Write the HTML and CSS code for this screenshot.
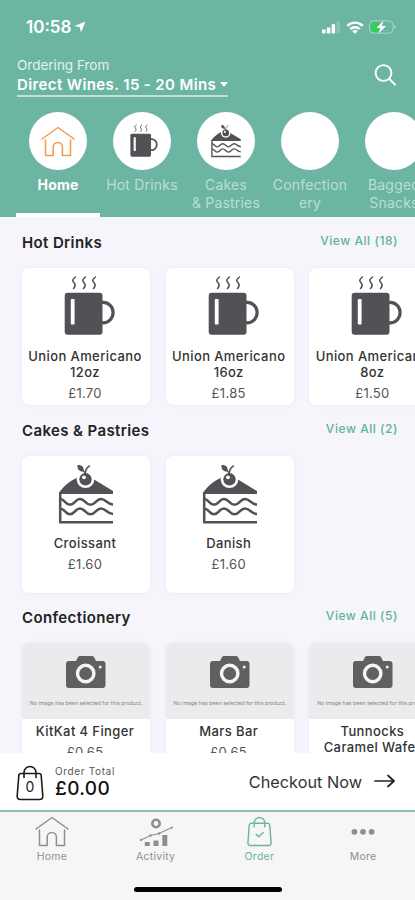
FILE: index.html
```html
<!DOCTYPE html>
<html lang="en">
<head>
<meta charset="utf-8">
<meta name="viewport" content="width=device-width, initial-scale=1">
<title>Order</title>
<link rel="stylesheet" href="styles.css">
</head>
<body>
<svg class="defs" aria-hidden="true">
  <symbol id="house" viewBox="0 0 34 31">
    <path d="M1 13 17 1.500 33 13M4.500 14v15.500h7.700V21a4.600 4.600 0 0 1 9.200 0v8.500h8.100V14" fill="none" stroke="currentColor" stroke-width="1.500" stroke-linecap="round" stroke-linejoin="round"/>
  </symbol>
  <symbol id="mug" viewBox="0 0 128 76">
    <rect x="42.700" y="24.700" width="37.800" height="42" rx="3" fill="#505255"/>
    <rect x="48.800" y="31" width="3.800" height="25.500" rx=".8" fill="#fff"/>
    <path d="M80 34.400h1.200a9.900 10.200 0 0 1 0 20.400H80" fill="none" stroke="#505255" stroke-width="3.200"/>
    <g fill="none" stroke="#484a4c" stroke-width="1.500" stroke-linecap="round">
      <path d="M53.500 9c-3.600 2.500-3.200 4-1.500 5.800s1.600 3.500-.5 5.700"/>
      <path d="M63.500 9c-3.600 2.500-3.200 4-1.500 5.800s1.600 3.500-.5 5.700"/>
      <path d="M73.500 9c-3.600 2.500-3.200 4-1.500 5.800s1.600 3.500-.5 5.700"/>
    </g>
  </symbol>
  <symbol id="cake" viewBox="0 0 128 76">
    <path d="M37 37c5-8 13-14 22-16.500l9 .5 23 14V38H37z" fill="#505255"/>
    <g fill="none" stroke="#505255" stroke-width="2.500">
      <path d="M38.200 36v30.300H91"/>
      <path d="M38 43c5 0 5 5.800 10 5.800s5-5.800 10-5.800 5.500 5.800 10.500 5.800S74 43 79 43s6 5.500 12 5.500"/>
      <path d="M38 52.500c5 0 5 5.800 10 5.800s5-5.800 10-5.800 5.500 5.800 10.500 5.800S74 52.500 79 52.500s6 5.500 12 5.500"/>
    </g>
    <circle cx="63.500" cy="23.300" r="8.800" fill="#fff"/>
    <circle cx="63.500" cy="23.300" r="6.200" fill="#505255"/>
    <circle cx="62" cy="21.300" r="1.900" fill="#fff"/>
    <path d="M63.200 18.500c0-4 1.300-7 4.300-8.500M63.200 18c-.5-1.500-1-2.500-2-3.500" fill="none" stroke="#505255" stroke-width="1.400" stroke-linecap="round"/>
    <path d="M55.500 9c4-.5 7 2 6 6.500-4 .5-6.500-2-6-6.500z" fill="#505255"/>
  </symbol>
  <symbol id="camera" viewBox="0 0 128 76">
    <path d="M47 18h7l2-4q.5-1 2-1h12q1.500 0 2 1l2 4h6.500q3 0 3 3v21q0 3-3 3H47q-3 0-3-3V21q0-3 3-3z" fill="#606060"/>
    <circle cx="63.700" cy="30.500" r="8.200" fill="#606060" stroke="#f4f5f5" stroke-width="3.400"/>
    <circle cx="78.200" cy="24" r="1.500" fill="#eceeee"/>
  </symbol>
</svg>

<div class="phone">
  <header class="header">
    <div class="status">
      <span class="time">10:58</span>
      <svg class="locate" viewBox="0 0 12 12"><path d="M11.500.5 7 11.500 5.800 6.200.5 5z" fill="#fff"/></svg>
      <svg class="signal" viewBox="0 0 19 13"><g fill="#fff"><rect y="8.500" width="3.500" height="4" rx=".8"/><rect x="4.800" y="6.500" width="3.500" height="6" rx=".8"/><rect x="9.600" y="3" width="3.500" height="9.500" rx=".8"/><rect x="14.400" width="3.500" height="12.500" rx=".8" opacity=".2"/></g></svg>
      <svg class="wifi" viewBox="0 0 18 13"><g fill="none" stroke="#fff" stroke-width="2.400"><path d="M1.200 4.800a11.200 11.200 0 0 1 15.600 0M4.200 8.100a7 7 0 0 1 9.600 0"/></g><path d="M9 12.800 6.300 10.200a4 4 0 0 1 5.400 0z" fill="#fff"/></svg>
      <svg class="battery" viewBox="0 0 27 14"><rect x=".5" y=".8" width="23.500" height="12.400" rx="4" fill="none" stroke="#fff" stroke-opacity=".4"/><path d="M4.500 2.200H10v9.600H4.500q-2.500 0-2.500-2.500V4.700q0-2.500 2.500-2.500z" fill="#2fd158"/><path d="M25.200 4.800v4.400q1.300-.6 1.300-2.200t-1.300-2.200z" fill="#fff" opacity=".5"/><path d="M14.500.5 7.500 8h4l-2 5.500L17.200 6h-4.400z" fill="#fff"/></svg>
    </div>
    <div class="venue-row">
      <div class="venue">
        <div class="venue-label"><span>Ordering From</span></div>
        <div class="venue-name"><span>Direct Wines. 15 - 20 Mins</span><i class="caret"></i></div>
      </div>
      <svg class="search" viewBox="0 0 24 24"><circle cx="10.500" cy="10" r="7.900" fill="none" stroke="#fff" stroke-width="1.900"/><path d="m16.200 15.800 6.400 6.400" stroke="#fff" stroke-width="2"/></svg>
    </div>
    <nav class="tabs">
      <div class="tab active"><div class="disc"><svg class="house"><use href="#house"/></svg></div><span>Home</span></div>
      <div class="tab"><div class="disc"><svg class="mini"><use href="#mug"/></svg></div><span>Hot Drinks</span></div>
      <div class="tab"><div class="disc"><svg class="mini"><use href="#cake"/></svg></div><span>Cakes<br>&amp; Pastries</span></div>
      <div class="tab"><div class="disc"></div><span>Confection<br>ery</span></div>
      <div class="tab"><div class="disc"></div><span>Bagged<br>Snacks</span></div>
    </nav>
  </header>

  <main class="content">
    <section class="section">
      <div class="section-head"><h2>Hot Drinks</h2><a>View All (18)</a></div>
      <div class="cards">
        <article class="card"><svg class="art"><use href="#mug"/></svg><h3>Union Americano<br>12oz</h3><p>£1.70</p></article>
        <article class="card"><svg class="art"><use href="#mug"/></svg><h3>Union Americano<br>16oz</h3><p>£1.85</p></article>
        <article class="card"><svg class="art"><use href="#mug"/></svg><h3>Union Americano<br>8oz</h3><p>£1.50</p></article>
      </div>
    </section>
    <section class="section">
      <div class="section-head"><h2>Cakes &amp; Pastries</h2><a>View All (2)</a></div>
      <div class="cards">
        <article class="card"><svg class="art"><use href="#cake"/></svg><h3>Croissant</h3><p>£1.60</p></article>
        <article class="card"><svg class="art"><use href="#cake"/></svg><h3>Danish</h3><p>£1.60</p></article>
      </div>
    </section>
    <section class="section">
      <div class="section-head"><h2>Confectionery</h2><a>View All (5)</a></div>
      <div class="cards">
        <article class="card"><div class="noimage"><svg class="art"><use href="#camera"/></svg><small>No image has been selected for this product.</small></div><h3>KitKat 4 Finger</h3><p>£0.65</p></article>
        <article class="card"><div class="noimage"><svg class="art"><use href="#camera"/></svg><small>No image has been selected for this product.</small></div><h3>Mars Bar</h3><p>£0.65</p></article>
        <article class="card"><div class="noimage"><svg class="art"><use href="#camera"/></svg><small>No image has been selected for this product.</small></div><h3>Tunnocks<br>Caramel Wafer</h3><p>£0.65</p></article>
      </div>
    </section>
  </main>

  <div class="basket">
    <svg class="bag" viewBox="0 0 28 36"><g fill="none" stroke="#1b1b1b" stroke-width="1.600" stroke-linecap="round"><path d="M5 8.500h18q2 0 2.200 2l1.600 20.500q.2 3.500-3.300 3.500h-19Q1 34.500 1.200 31L2.800 10.500Q3 8.500 5 8.500zM8 12.500V7.500a6 6 0 0 1 12 0v5"/></g><text x="14" y="27" text-anchor="middle">0</text></svg>
    <div class="total"><small>Order Total</small><strong>£0.00</strong></div>
    <div class="checkout"><span>Checkout Now</span><svg viewBox="0 0 22 14"><path d="M1 7h19M14 1.500 20 7l-6 5.500" fill="none" stroke="#222" stroke-width="1.700" stroke-linecap="round" stroke-linejoin="round"/></svg></div>
  </div>

  <footer class="footer">
    <nav class="nav">
      <div class="item"><svg class="house"><use href="#house"/></svg><span>Home</span></div>
      <div class="item"><svg class="activity" viewBox="0 0 34 31"><circle cx="17" cy="7.500" r="3.700" fill="none" stroke="currentColor" stroke-width="2.600"/><path d="M2 24 11.500 19.500 20 17.500l13-6" fill="none" stroke="currentColor" stroke-width="1.200"/><g fill="currentColor"><circle cx="2" cy="24" r="1.200"/><circle cx="11.500" cy="19.500" r="1.200"/><circle cx="20" cy="17.500" r="1.200"/><circle cx="33" cy="11.500" r="1"/><path d="M5.800 26h5v4h-5zM14.500 24.500h5v5.500h-5zM23.300 19h5v11h-5z"/></g></svg><span>Activity</span></div>
      <div class="item current"><svg class="order" viewBox="0 0 26 32"><g fill="none" stroke="currentColor" stroke-width="1.500" stroke-linecap="round" stroke-linejoin="round"><path d="M4.500 7.500h17q2 0 2.200 2l1.300 18q.2 3-2.800 3H3.800q-3 0-2.800-3l1.300-18q.2-2 2.200-2zM7.500 11V7a5.500 5.500 0 0 1 11 0v4M9.500 19l2.800 2.500 4.500-4.500"/></g></svg><span>Order</span></div>
      <div class="item"><svg class="more" viewBox="0 0 34 31"><g fill="currentColor"><circle cx="8.400" cy="15.800" r="2.900"/><circle cx="17" cy="15.800" r="2.900"/><circle cx="25.600" cy="15.800" r="2.900"/></g></svg><span>More</span></div>
    </nav>
    <div class="grabber"></div>
  </footer>
</div>
</body>
</html>
```

FILE: styles.css
```css
* { box-sizing: border-box; margin: 0; padding: 0; }
body { width: 415px; height: 900px; overflow: hidden; font-family: Inter, "Liberation Sans", sans-serif; background: #f5f5fb; color: #222; }
svg { display: block; flex: none; }
.defs { width: 0; height: 0; position: absolute; }
.phone { display: flex; flex-direction: column; width: 415px; height: 900px; overflow: hidden; }

.header { flex: none; height: 217px; background: #6db5a3; color: #fff; }
.status { display: flex; align-items: center; height: 54px; padding-left: 26px; }
.time { font-size: 17px; font-weight: 600; line-height: 20px; width: 48px; white-space: nowrap; }
.locate { width: 12px; height: 12px; }
.signal { width: 19px; height: 13px; margin-left: 236px; }
.wifi { width: 18px; height: 13px; margin-left: 5px; }
.battery { width: 27px; height: 14px; margin-left: 5px; }
.venue-row { display: flex; justify-content: space-between; height: 58px; padding: 2px 18px 0 17px; }
.venue { width: 211px; height: 41px; border-bottom: 2px solid #c3e0d8; white-space: nowrap; }
.venue-label { font-size: 13.5px; line-height: 19px; color: #e2f2ed; }
.venue-name { display: flex; align-items: center; justify-content: space-between; font-size: 15px; font-weight: 600; line-height: 19px; letter-spacing: 0.38px; }
.caret { border: 4px solid transparent; border-top: 5px solid #fff; border-bottom: 0; }
.search { width: 24px; height: 24px; margin-top: 7px; }
.tabs { display: flex; height: 105px; padding-left: 16px; overflow: hidden; }
.tab { flex: none; display: flex; flex-direction: column; align-items: center; width: 84px; font-size: 14px; line-height: 17.5px; letter-spacing: 0.2px; text-align: center; color: #b9dfd3; white-space: nowrap; }
.tab span { margin-top: 6px; }
.tab.active { color: #fff; font-weight: 700; border-bottom: 4px solid #fff; }
.disc { display: flex; align-items: center; justify-content: center; width: 58px; height: 58px; border-radius: 50%; background: #fff; color: #f29a45; flex: none; overflow: hidden; }
.house { width: 34px; height: 31px; }
.mini { width: 70px; height: 42px; }

.content { flex: none; height: 536px; padding-top: 13px; overflow: hidden; }
.section { height: 187.5px; padding-left: 22px; }
.section-head { display: flex; justify-content: space-between; height: 38px; padding-right: 17px; }
h2 { font-size: 15px; font-weight: 600; line-height: 26px; letter-spacing: 0.38px; white-space: nowrap; }
.section-head a { font-size: 12px; font-weight: 500; line-height: 22px; letter-spacing: 0.55px; color: #62b19b; white-space: nowrap; }
.cards { display: flex; gap: 15.7px; }
.card { flex: none; width: 128px; height: 137px; border-radius: 7px; background: #fff; box-shadow: 0 0 4px #e9e9f6; text-align: center; overflow: hidden; }
.art { width: 128px; height: 76px; }
h3 { margin: 3.5px 2px 0 0; font-size: 13px; font-weight: 500; line-height: 16px; letter-spacing: 0.4px; color: #333; white-space: nowrap; }
.card p { margin: 4px 2px 0 0; font-size: 13px; line-height: 18px; letter-spacing: 0.3px; color: #555; }
.noimage { height: 76px; background: #e9ebec; }
.noimage small { display: block; margin-top: -20px; font-size: 5.3px; line-height: 8px; color: #858585; white-space: nowrap; }

.basket { flex: none; display: flex; align-items: center; height: 57px; padding: 0 19px 0 16px; background: #fff; }
.bag { width: 28px; height: 36px; margin-top: 2px; }
.bag text { font-size: 14px; fill: #222; }
.total { margin-left: 11px; display: flex; flex-direction: column; white-space: nowrap; }
.total small { font-size: 10px; line-height: 14px; letter-spacing: 0.65px; color: #555; }
.total strong { font-size: 19px; font-weight: 500; line-height: 22px; letter-spacing: 0.35px; color: #111; }
.checkout { display: flex; align-items: center; gap: 12px; margin-left: auto; font-size: 16.3px; color: #333; white-space: nowrap; }
.checkout svg { width: 22px; height: 14px; margin-top: -1px; }

.footer { flex: none; height: 90px; border-top: 2px solid #8cc0b1; background: #f6f6f6; }
.nav { display: flex; height: 75px; padding-top: 4px; }
.item { flex: 1; display: flex; flex-direction: column; align-items: center; color: #8f8f8f; font-size: 10.5px; line-height: 14px; letter-spacing: 0.25px; }
.item span { margin-top: 3px; }
.current { color: #6db5a3; }
.activity, .more { width: 34px; height: 31px; }
.order { width: 25px; height: 31px; }
.grabber { width: 148px; height: 5px; margin: 0 auto; border-radius: 3px; background: #000; }
```
